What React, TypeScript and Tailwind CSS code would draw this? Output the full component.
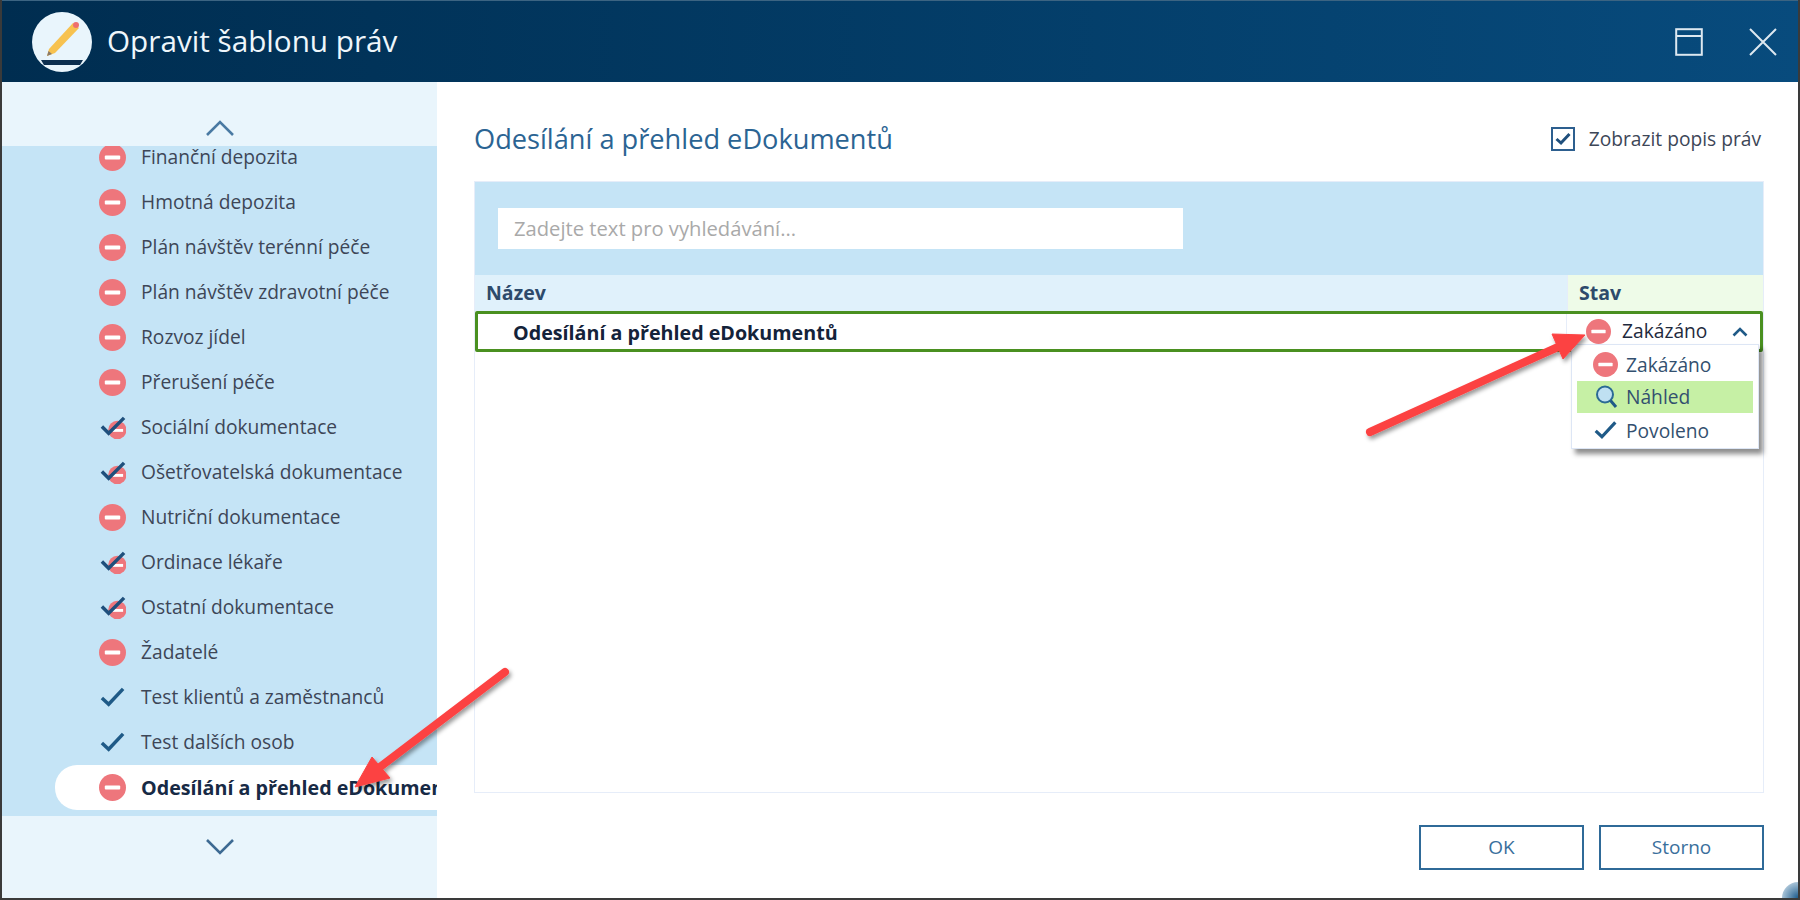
import React from "react";

const font = { fontFamily: '"Open Sans", "Noto Sans", sans-serif' };

function Minus({ size = 27 }: { size?: number }) {
  return (
    <svg width={size} height={size} viewBox="0 0 28 28" className="shrink-0">
      <circle cx="14" cy="14" r="14" fill="#ee767c" />
      <rect x="6" y="12" width="16" height="4" rx="1" fill="#fff" />
    </svg>
  );
}

function Check({ size = 27 }: { size?: number }) {
  return (
    <svg width={size} height={size} viewBox="0 0 28 28" className="shrink-0">
      <path d="M3 14.5 L10 21 L25 5" fill="none" stroke="#1f5a87" strokeWidth="3.6" />
    </svg>
  );
}

function Mixed() {
  return (
    <svg width="27" height="27" viewBox="0 0 28 28" className="shrink-0">
      <circle cx="19" cy="16.5" r="9.5" fill="#ee767c" />
      <rect x="14" y="15.5" width="11" height="3" fill="#fff" />
      <path d="M3 13 L10 20 L26 4" fill="none" stroke="#1f4f7c" strokeWidth="3.6" />
    </svg>
  );
}

function Lens() {
  return (
    <svg width="24" height="24" viewBox="0 0 24 24" className="shrink-0">
      <circle cx="10" cy="9.5" r="8" fill="#bfe0f2" stroke="#2b6a94" strokeWidth="2" />
      <path d="M15.5 15.5 L21 22" stroke="#1f5a87" strokeWidth="3" />
    </svg>
  );
}

const items: [string, "minus" | "mixed" | "check"][] = [
  ["Finanční depozita", "minus"],
  ["Hmotná depozita", "minus"],
  ["Plán návštěv terénní péče", "minus"],
  ["Plán návštěv zdravotní péče", "minus"],
  ["Rozvoz jídel", "minus"],
  ["Přerušení péče", "minus"],
  ["Sociální dokumentace", "mixed"],
  ["Ošetřovatelská dokumentace", "mixed"],
  ["Nutriční dokumentace", "minus"],
  ["Ordinace lékaře", "mixed"],
  ["Ostatní dokumentace", "mixed"],
  ["Žadatelé", "minus"],
  ["Test klientů a zaměstnanců", "check"],
  ["Test dalších osob", "check"],
];

function Row({ label, kind }: { label: string; kind: "minus" | "mixed" | "check" }) {
  return (
    <div className="flex h-[45px] shrink-0 items-center pl-[97px]">
      <div className="flex w-[42px] shrink-0">
        {kind === "minus" ? <Minus /> : kind === "mixed" ? <Mixed /> : <Check />}
      </div>
      <span className="whitespace-nowrap text-[19.2px] text-[#3d4657]">{label}</span>
    </div>
  );
}

export default function App() {
  return (
    <div style={font} className="relative flex h-[900px] w-[1800px] flex-col overflow-hidden border-x-2 border-b-2 border-[#3a3a3a] bg-white">
      <header className="flex h-[82px] shrink-0 items-center justify-between border-t border-[#3c6482] bg-gradient-to-r from-[#002d50] to-[#084b7d] pl-[30px] pr-[21px]">
        <div className="flex items-center gap-[15px]">
          <div className="flex h-[60px] w-[60px] items-center justify-center rounded-full bg-[#e9f5fc]">
            <svg width="60" height="60" viewBox="0 0 60 60">
              <path d="M15 44 L17 37 L41 11 L47 16 L23 41 Z" fill="#f7c250" />
              <circle cx="44" cy="13" r="3" fill="#ee6f6f" />
              <path d="M15 44 L16.5 39 L20 42 Z" fill="#8a7a6a" />
              <path d="M9 48 H51 L48 53 H12 Z" fill="#0d2f4f" />
            </svg>
          </div>
          <span className="text-[29.7px] text-[#eef6fb]">Opravit šablonu práv</span>
        </div>
        <div className="flex items-center gap-[46px]">
          <svg width="28" height="28" viewBox="0 0 28 28">
            <rect x="1.2" y="1.2" width="25.6" height="25.6" fill="none" stroke="#dde8f0" strokeWidth="2" />
            <path d="M1 8 H27" stroke="#dde8f0" strokeWidth="2" />
          </svg>
          <svg width="28" height="28" viewBox="0 0 28 28">
            <path d="M1 1 L27 27 M27 1 L1 27" stroke="#dde8f0" strokeWidth="2" />
          </svg>
        </div>
      </header>

      <div className="flex min-h-0 flex-1">
        <aside className="relative z-0 flex w-[435px] shrink-0 flex-col bg-[#c5e4f6]">
          <div className="z-10 flex h-[64px] shrink-0 items-end justify-center bg-[#e9f5fc] pb-[9px]">
            <svg width="30" height="18" viewBox="0 0 30 18">
              <path d="M2 16 L15 3 L28 16" fill="none" stroke="#4a7aa3" strokeWidth="2.6" />
            </svg>
          </div>
          <div className="flex h-[670px] shrink-0 flex-col overflow-hidden">
            <div className="-mt-[11px] flex flex-col">
              {items.map(([l, k]) => (
                <Row key={l} label={l} kind={k} />
              ))}
              <div className="ml-[53px] flex h-[45px] items-center overflow-hidden rounded-l-[22px] bg-white pl-[44px]">
                <div className="flex w-[42px] shrink-0">
                  <Minus />
                </div>
                <span className="whitespace-nowrap text-[19.7px] font-bold text-[#172a45]">Odesílání a přehled eDokumentů</span>
              </div>
            </div>
          </div>
          <div className="flex flex-1 items-start justify-center bg-[#e9f5fc] pt-[22px]">
            <svg width="30" height="18" viewBox="0 0 30 18">
              <path d="M2 2 L15 15 L28 2" fill="none" stroke="#3d6a93" strokeWidth="2.6" />
            </svg>
          </div>
        </aside>

        <main className="flex min-w-0 flex-1 flex-col pl-[37px] pr-[34px] pt-[37px]">
          <div className="flex h-[40px] shrink-0 items-center justify-between">
            <h1 className="text-[27.2px] font-normal text-[#2b6493]">Odesílání a přehled eDokumentů</h1>
            <label className="flex items-center gap-[14px] pr-[3px]">
              <span className="flex h-[24px] w-[24px] items-center justify-center border-2 border-[#2d5f8f]">
                <svg width="16" height="14" viewBox="0 0 16 14">
                  <path d="M1.5 7 L6 11 L14.5 2" fill="none" stroke="#1f4f7c" strokeWidth="3" />
                </svg>
              </span>
              <span className="text-[19.2px] text-[#3d4657]">Zobrazit popis práv</span>
            </label>
          </div>

          <section className="mt-[22px] flex h-[612px] shrink-0 flex-col border border-[#e6edf9]">
            <div className="flex h-[93px] shrink-0 items-start bg-[#c5e4f6] pl-[23px] pt-[26px]">
              <div className="flex h-[41px] w-[685px] items-center bg-white pl-[16px] text-[20.2px] text-[#a9a9a9]">
                Zadejte text pro vyhledávání...
              </div>
            </div>
            <div className="flex h-[36px] shrink-0 text-[19.5px] font-bold text-[#2d4a6b]">
              <div className="flex flex-1 items-center bg-[#e0f1fb] pl-[11px]">Název</div>
              <div className="flex w-[196px] items-center border-l border-[#e6edf9] bg-[#eefbe8] pl-[11px]">Stav</div>
            </div>
            <div className="relative flex h-[41px] shrink-0 items-center justify-between rounded-[2px] border-[3px] border-[#4a9020] pl-[35px]">
              <span className="pt-[2px] text-[19.7px] font-bold text-[#14233a]">Odesílání a přehled eDokumentů</span>
              <div className="flex h-full w-[194px] items-center border-l border-[#e6edf9] pl-[19px] text-[19.2px] text-[#1f2a3d]">
                <Minus size={25} />
                <span className="ml-[11px]">Zakázáno</span>
                <svg width="16" height="10" viewBox="0 0 16 10" className="ml-[25px]">
                  <path d="M1.5 8.5 L8 2 L14.5 8.5" fill="none" stroke="#1f5a87" strokeWidth="2.6" />
                </svg>
              </div>
              <div className="absolute right-[1px] top-[30px] z-10 flex h-[105px] w-[188px] flex-col border border-[#dde6f5] bg-white px-[5px] pt-[3px] text-[19.2px] text-[#33506f] shadow-[4px_5px_5px_rgba(0,0,0,0.45)]">
                <div className="flex h-[33px] items-center pl-[16px]">
                  <Minus size={25} />
                  <span className="ml-[8px] pt-[1px]">Zakázáno</span>
                </div>
                <div className="flex h-[32px] items-center bg-[#c6f0a5] pl-[18px]">
                  <div className="flex w-[31px]"><Lens /></div>
                  <span>Náhled</span>
                </div>
                <div className="flex h-[35px] items-center pl-[16px]">
                  <div className="flex w-[33px]"><Check size={25} /></div>
                  <span className="pt-[1px]">Povoleno</span>
                </div>
              </div>
            </div>
          </section>

          <div className="mt-[32px] flex justify-end gap-[15px]">
            <button className="h-[45px] w-[165px] border-2 border-[#2f6a98] bg-white text-[19px] text-[#3a6f9c]">OK</button>
            <button className="h-[45px] w-[165px] border-2 border-[#2f6a98] bg-white text-[19px] text-[#3a6f9c]">Storno</button>
          </div>
        </main>
      </div>

      <div className="absolute bottom-0 right-0 h-[16px] w-[16px] rounded-tl-full bg-[radial-gradient(circle_at_100%_100%,#1b5a8c,#dbe9f2_95%)]" />

      <svg className="pointer-events-none absolute -left-[2px] top-0 z-20" width="1800" height="900" viewBox="0 0 1800 900">
        <defs>
          <filter id="s" x="-20%" y="-20%" width="140%" height="140%">
            <feDropShadow dx="2" dy="3" stdDeviation="2" floodColor="#000" floodOpacity="0.4" />
          </filter>
        </defs>
        <g filter="url(#s)" fill="#fc4343" stroke="#fc4343" strokeLinejoin="round">
          <path d="M1370 432 L1558 347" strokeWidth="8" strokeLinecap="round" fill="none" />
          <path d="M1585 335 L1552 334 L1563 359 Z" strokeWidth="1" />
          <path d="M505 672 L380 767" strokeWidth="8" strokeLinecap="round" fill="none" />
          <path d="M355 787 L372 757 L390 778 Z" strokeWidth="1" />
        </g>
      </svg>
    </div>
  );
}
